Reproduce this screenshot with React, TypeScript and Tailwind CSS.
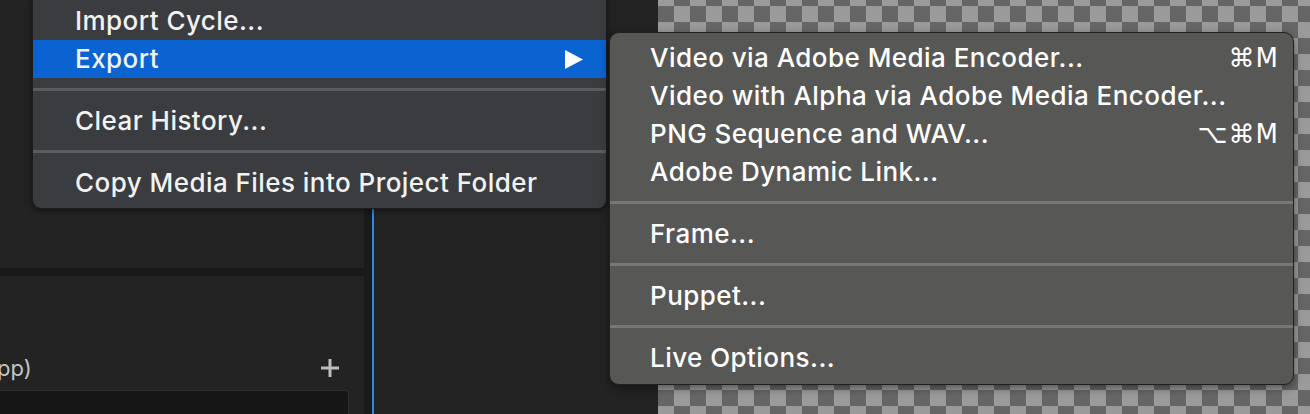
import React from "react";

const font = { fontFamily: "Inter, 'DejaVu Sans', sans-serif" };

function Sep({ color }: { color: string }) {
  return <div className={`mt-[10px] mb-[11px] h-[3px] ${color}`} />;
}

function Row({ label, shortcut, highlight, arrow }: { label: string; shortcut?: string; highlight?: boolean; arrow?: boolean }) {
  return (
    <div className={`flex h-[38px] items-center justify-between ${highlight ? "bg-[#0a63d0]" : ""}`}>
      <span className="-mt-[2px] whitespace-nowrap tracking-[0.45px]">{label}</span>
      {shortcut && <span className="whitespace-nowrap font-['DejaVu_Sans'] tracking-[1px]">{shortcut}</span>}
      {arrow && (
        <svg width="18" height="19" viewBox="0 0 18 19" className="mr-[23px]">
          <polygon points="0,0 18,9.5 0,19" fill="#ffffff" />
        </svg>
      )}
    </div>
  );
}

export default function App() {
  return (
    <div className="relative flex h-[414px] w-[1310px] overflow-hidden bg-[#1f1f1f]" style={font}>
      {/* left column */}
      <div className="flex w-[364px] shrink-0 flex-col">
        <div className="h-[268px] shrink-0 bg-[#232323]" />
        <div className="h-[8px] shrink-0 bg-[#191919]" />
        <div className="flex shrink-0 flex-col bg-[#232323]">
          <div className="mt-[78px] flex h-[28px] shrink-0 items-center justify-between pr-[25px]">
            <span className="-ml-[3px] text-[22px] text-[#c4c4c4]">pp)</span>
            <svg width="18" height="18" viewBox="0 0 18 18">
              <rect x="7.5" y="0" width="3" height="18" fill="#bdbdbd" />
              <rect x="0" y="7.5" width="18" height="3" fill="#bdbdbd" />
            </svg>
          </div>
          <div className="mt-[8px] mr-[15px] h-[40px] shrink-0 rounded-tr-[4px] border-t border-r border-[#2c2c2c] bg-[#161616]" />
        </div>
      </div>
      <div className="w-[8px] shrink-0 bg-[#1a1a1a]" />
      <div className="w-[2px] shrink-0 bg-[#3584e4]" />
      <div className="w-[284px] shrink-0 bg-[#232323]" />
      <div className="flex-1 bg-[conic-gradient(#9a9a9a_25%,#666666_0_50%,#9a9a9a_0_75%,#666666_0)] bg-[length:32px_32px] bg-[position:0px_6px]" />

      {/* main menu */}
      <div className="absolute left-[32px] top-[-4px] w-[575px] rounded-b-[9px] border border-[#1c1c1c] bg-[#3a3c40] pt-[5px] pb-[6px] text-[26px] font-medium text-[#f2f2f2] shadow-[0_2px_6px_rgba(0,0,0,0.5)]">
        <div className="pl-[42px]"><Row label="Import Cycle..." /></div>
        <div className="bg-[#0a63d0] pl-[42px]"><Row label="Export" arrow highlight /></div>
        <Sep color="bg-[#5a5c60]" />
        <div className="pl-[42px]"><Row label="Clear History..." /></div>
        <Sep color="bg-[#5a5c60]" />
        <div className="pl-[42px]"><Row label="Copy Media Files into Project Folder" /></div>
      </div>

      {/* submenu */}
      <div className="absolute left-[609px] top-[32px] w-[685px] rounded-[10px] border border-[#202020] bg-[#575756] pt-[6px] pb-[7px] text-[26px] font-medium text-[#ffffff] shadow-[0_3px_8px_rgba(0,0,0,0.45)]">
        <div className="pl-[40px] pr-[14px]">
          <Row label="Video via Adobe Media Encoder..." shortcut="⌘M" />
          <Row label="Video with Alpha via Adobe Media Encoder..." />
          <Row label="PNG Sequence and WAV..." shortcut="⌥⌘M" />
          <Row label="Adobe Dynamic Link..." />
        </div>
        <Sep color="bg-[#777777]" />
        <div className="pl-[40px] pr-[14px]"><Row label="Frame..." /></div>
        <Sep color="bg-[#777777]" />
        <div className="pl-[40px] pr-[14px]"><Row label="Puppet..." /></div>
        <Sep color="bg-[#777777]" />
        <div className="pl-[40px] pr-[14px]"><Row label="Live Options..." /></div>
      </div>
    </div>
  );
}
